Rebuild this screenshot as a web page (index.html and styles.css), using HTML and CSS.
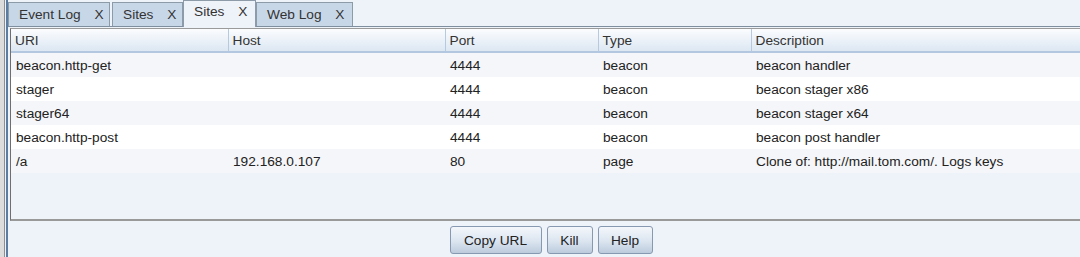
FILE: index.html
```html
<!DOCTYPE html>
<html lang="en">
<head>
    <meta charset="UTF-8">
    <title>Sites</title>
    <link rel="stylesheet" href="styles.css">
</head>
<body>
    <div class="window">
        <div class="tabs">
            <div class="tab tab-event">Event Log <span class="close">X</span></div>
            <div class="tab tab-sites">Sites <span class="close">X</span></div>
            <div class="tab tab-sites active">Sites <span class="close">X</span></div>
            <div class="tab tab-web">Web Log <span class="close">X</span></div>
        </div>

        <div class="panel">
            <div class="table-frame">
                <table class="sites">
                    <colgroup>
                        <col style="width: 217px">
                        <col style="width: 217px">
                        <col style="width: 153px">
                        <col style="width: 153px">
                        <col>
                    </colgroup>
                    <thead>
                        <tr>
                            <th>URI</th>
                            <th>Host</th>
                            <th>Port</th>
                            <th>Type</th>
                            <th>Description</th>
                        </tr>
                    </thead>
                    <tbody>
                        <tr>
                            <td>beacon.http-get</td>
                            <td></td>
                            <td>4444</td>
                            <td>beacon</td>
                            <td>beacon handler</td>
                        </tr>
                        <tr>
                            <td>stager</td>
                            <td></td>
                            <td>4444</td>
                            <td>beacon</td>
                            <td>beacon stager x86</td>
                        </tr>
                        <tr>
                            <td>stager64</td>
                            <td></td>
                            <td>4444</td>
                            <td>beacon</td>
                            <td>beacon stager x64</td>
                        </tr>
                        <tr>
                            <td>beacon.http-post</td>
                            <td></td>
                            <td>4444</td>
                            <td>beacon</td>
                            <td>beacon post handler</td>
                        </tr>
                        <tr>
                            <td>/a</td>
                            <td>192.168.0.107</td>
                            <td>80</td>
                            <td>page</td>
                            <td>Clone of: http://mail.tom.com/. Logs keys</td>
                        </tr>
                    </tbody>
                </table>
            </div>

            <div class="buttons">
                <button class="btn btn-copy">Copy URL</button>
                <button class="btn btn-kill">Kill</button>
                <button class="btn btn-help">Help</button>
            </div>
        </div>
    </div>
</body>
</html>
```

FILE: styles.css
```css
body {
    margin: 0;
    font-family: 'Liberation Sans', Arial, sans-serif;
    font-size: 13.7px;
    color: #333;
    background: #eef2f9;
    overflow: hidden;
}

.window {
    height: 257px;
    background: #eef2f9;
    border-left: 4px solid #dcdcdc;
    box-shadow: inset 1px 0 0 #8e8e8e, inset 2px 0 0 #eef2f9, inset 4px 0 0 #5b7ca3;
    padding-left: 4px;
    overflow: hidden;
}

/* tab strip */
.tabs {
    display: flex;
    height: 26px;
    align-items: flex-end;
    border-bottom: 1px solid #7f8fa0;
}

.tab {
    box-sizing: border-box;
    height: 24px;
    padding: 4px 0 0 10px;
    background: #c8d7e8;
    border: 1px solid #8d9aa8;
    border-bottom: none;
    margin-right: 2px;
    white-space: nowrap;
    color: #333;
}

.tab .close {
    margin-left: 10px;
}

.tab-event { width: 102px; }
.tab-sites { width: 71px; }
.tab-web { width: 97px; }

.tab.active {
    height: 27px;
    margin-bottom: -1px;
    padding-top: 3px;
    background: #eef2f9;
    margin-right: 0;
    margin-left: -2px;
    width: 73px;
}

/* table */
.panel {
    padding-top: 1px;
}

.table-frame {
    margin-left: 2px;
    height: 190px;
    border-top: 1px solid #9a9a9a;
    border-left: 1px solid #6e6e6e;
    border-bottom: 2px solid #999;
    background: #eef2f9;
    overflow: hidden;
}

.sites {
    border-collapse: collapse;
    table-layout: fixed;
    width: 1200px;
}

.sites th {
    height: 22px;
    padding: 0 4px;
    text-align: left;
    font-weight: normal;
    color: #333;
    background: linear-gradient(#fbfcfe, #dce7f3);
    border-right: 1px solid #b6c9de;
    border-bottom: 2px solid #b3c8e0;
}

.sites td {
    height: 24px;
    padding: 0 5px;
    white-space: nowrap;
    color: #222;
}

.sites tbody tr:nth-child(odd) {
    background: #f5f6f9;
}

.sites tbody tr:nth-child(even) {
    background: #fff;
}

/* buttons */
.buttons {
    display: flex;
    justify-content: center;
    gap: 5px;
    padding: 5px 0 0 14px;
}

.btn {
    font-family: inherit;
    font-size: 13.7px;
    color: #222;
    height: 28px;
    padding: 0;
    border: 1px solid #8799b0;
    border-radius: 3px;
    background: linear-gradient(#f4f7fb, #dbe5f0 55%, #bccbdc);
}

.btn-copy { width: 92px; }
.btn-kill { width: 46px; }
.btn-help { width: 55px; }
```
